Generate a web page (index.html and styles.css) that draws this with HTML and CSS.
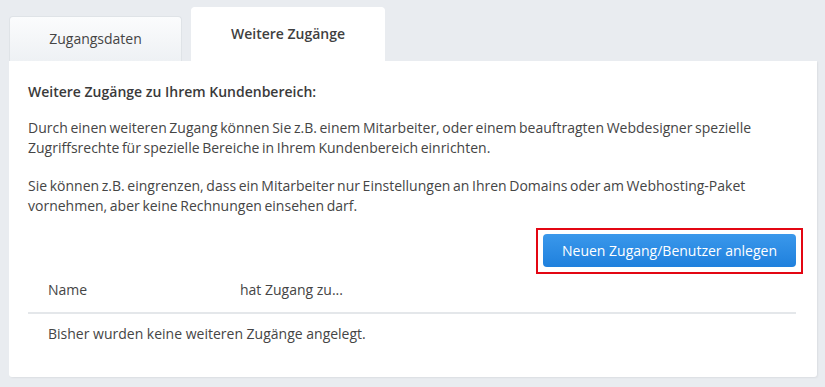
FILE: index.html
```html
<!DOCTYPE html>
<html lang="de">
  <head>
    <meta charset="utf-8" />
    <title>Weitere Zugänge</title>
    <link rel="stylesheet" href="styles.css">
  </head>
  <body>
    <div class="tabs">
      <div class="tab">Zugangsdaten</div>
      <div class="tab tab-active">Weitere Zugänge</div>
    </div>

    <div class="panel">
      <h3>Weitere Zugänge zu Ihrem Kundenbereich:</h3>
      <p>Durch einen weiteren Zugang können Sie z.B. einem Mitarbeiter, oder einem beauftragten Webdesigner spezielle Zugriffsrechte für spezielle Bereiche in Ihrem Kundenbereich einrichten.</p>
      <p>Sie können z.B. eingrenzen, dass ein Mitarbeiter nur Einstellungen an Ihren Domains oder am Webhosting-Paket vornehmen, aber keine Rechnungen einsehen darf.</p>

      <div class="actions">
        <div class="highlight">
          <button class="btn-primary">Neuen Zugang/Benutzer anlegen</button>
        </div>
      </div>

      <table class="user-table">
        <thead>
          <tr>
            <th class="col-name">Name</th>
            <th>hat Zugang zu...</th>
          </tr>
        </thead>
        <tbody>
          <tr>
            <td colspan="2">Bisher wurden keine weiteren Zugänge angelegt.</td>
          </tr>
        </tbody>
      </table>
    </div>
  </body>
</html>
```

FILE: styles.css
```css
* {
  margin: 0;
  padding: 0;
  box-sizing: border-box;
}

body {
  font-family: 'Open Sans', 'Liberation Sans', sans-serif;
  font-size: 14px;
  line-height: 20px;
  color: #454545;
  background: #e9ecf0;
  padding: 7px 8px 0 9px;
  width: 825px;
  height: 387px;
  overflow: hidden;
}

.tabs {
  display: flex;
  align-items: flex-end;
  gap: 9px;
}

.tab {
  width: 173px;
  height: 45px;
  padding-top: 12px;
  text-align: center;
  color: #444;
  background: linear-gradient(#fbfcfd, #eef1f4);
  border: 1px solid #dfe3e7;
  border-bottom: none;
  border-radius: 4px 4px 0 0;
}

.tab-active {
  width: 194px;
  height: 54px;
  padding-top: 16px;
  font-weight: 600;
  color: #3f3f3f;
  background: #ffffff;
  border-color: #ffffff;
}

.panel {
  width: 808px;
  height: 316px;
  background: #ffffff;
  padding: 21px 21px 0 19px;
  border-radius: 0 0 3px 3px;
  box-shadow: 1px 1px 2px rgba(0, 0, 0, 0.06);
}

.panel h3 {
  font-size: 14px;
  font-weight: 600;
  color: #3a3a3a;
  margin-bottom: 16px;
}

.panel p {
  margin-bottom: 18px;
  word-spacing: -1px;
}

.actions {
  display: flex;
  justify-content: flex-end;
  margin-top: -6px;
  margin-right: -7px;
}

.highlight {
  border: 2px solid #e30613;
  padding: 4px 5px 5px;
}

.btn-primary {
  display: block;
  width: 253px;
  height: 33px;
  font-family: inherit;
  font-size: 14px;
  color: #ffffff;
  background: linear-gradient(#3a98eb, #1f80dd);
  border: none;
  border-radius: 4px;
  cursor: pointer;
}

.user-table {
  width: 100%;
  border-collapse: collapse;
}

.user-table th {
  text-align: left;
  font-weight: 400;
  padding: 6px 20px 12px;
  border-bottom: 2px solid #e4e7ea;
}

.user-table th.col-name {
  width: 192px;
}

.user-table td {
  padding: 10px 20px 12px;
}
```
